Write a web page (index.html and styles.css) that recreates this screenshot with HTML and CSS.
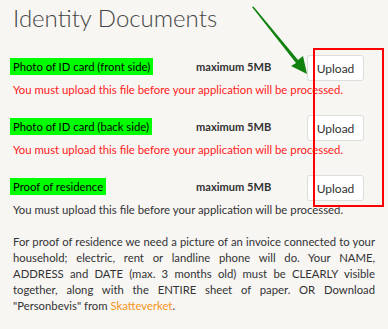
FILE: index.html
```html
<!DOCTYPE html>
<html>
<head>
    <meta charset="utf-8">
    <title>Identity Documents</title>
    <link rel="stylesheet" href="styles.css">
</head>
<body>
    <div class="page">
        <h1>Identity Documents</h1>

        <div class="docs">
            <div class="doc">
                <div class="doc-row">
                    <div class="doc-name"><span class="hl">Photo of ID card (front side)</span></div>
                    <div class="doc-max">maximum 5MB</div>
                    <button class="upload">Upload</button>
                </div>
                <div class="doc-msg required">You must upload this file before your application will be processed.</div>
            </div>
            <div class="doc">
                <div class="doc-row">
                    <div class="doc-name"><span class="hl">Photo of ID card (back side)</span></div>
                    <div class="doc-max">maximum 5MB</div>
                    <button class="upload">Upload</button>
                </div>
                <div class="doc-msg required">You must upload this file before your application will be processed.</div>
            </div>
            <div class="doc">
                <div class="doc-row">
                    <div class="doc-name"><span class="hl">Proof of residence</span></div>
                    <div class="doc-max">maximum 5MB</div>
                    <button class="upload">Upload</button>
                </div>
                <div class="doc-msg">You must upload this file before your application will be processed.</div>
            </div>

            <!-- annotation -->
            <div class="mark-box"></div>
            <svg class="mark-arrow" width="70" height="80" viewBox="0 0 70 80">
                <polygon points="0,0 1.5,-0.5 46,53 51,49 55,67 39,59 44,56" fill="#11820e" transform="translate(12,7)"/>
            </svg>
        </div>

        <p class="note">For proof of residence we need a picture of an invoice connected to your household; electric, rent or landline phone will do. Your NAME, ADDRESS and DATE (max. 3 months old) must be CLEARLY visible together, along with the ENTIRE sheet of paper. OR Download "Personbevis" from <a href="#">Skatteverket</a>.</p>
    </div>
</body>
</html>
```

FILE: styles.css
```css
body {
    margin: 0;
    background: #f7f6f3;
    font-family: Lato, "Open Sans", sans-serif;
    color: #333;
}
.page {
    padding: 0 13px;
    position: relative;
}
h1 {
    margin: 0;
    padding-top: 4px;
    font-size: 24px;
    font-weight: 300;
    color: #444;
    line-height: 28px;
}
.docs {
    margin-top: 22px;
}
.doc {
    margin-bottom: 16px;
}
.doc-row {
    display: flex;
    align-items: center;
    height: 28px;
}
.doc-name {
    width: 183px;
    font-size: 11.3px;
    color: #000;
    margin-top: -3px;
}
.hl {
    background: #00ff00;
    padding: 2px 3px;
    margin-left: -3px;
}
.doc-max {
    flex: 1;
    font-size: 11.1px;
    font-weight: bold;
    color: #333;
    margin-top: -3px;
}
.upload {
    font-family: inherit;
    font-size: 12px;
    color: #333;
    background: #fff;
    border: 1px solid #ddd;
    border-radius: 3px;
    width: 57px;
    height: 26px;
    padding: 0;
    margin-right: 11px;
}
.doc-msg {
    font-size: 11.35px;
    line-height: 16px;
}
.required {
    color: #ff1a1a;
}
.mark-box {
    position: absolute;
    left: 313px;
    top: 48px;
    width: 67px;
    height: 155px;
    border: 2px solid #f00;
}
.mark-arrow {
    position: absolute;
    left: 240px;
    top: 0;
}
.note {
    margin: 7px 0 0;
    font-size: 11.3px;
    line-height: 16px;
    text-align: justify;
}
.note a {
    color: #f7941d;
    text-decoration: none;
}
```
